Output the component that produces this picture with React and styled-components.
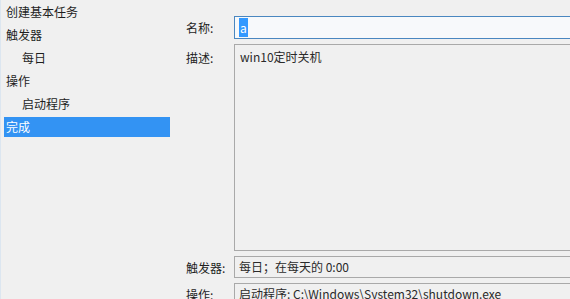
import React from 'react';
import styled, { createGlobalStyle } from 'styled-components';

const GlobalStyle = createGlobalStyle`
    html, body {
        margin: 0;
        padding: 0;
        background: #f0f0f0;
        overflow: hidden;
    }
    body {
        font-family: "Noto Sans CJK SC", "Liberation Sans", sans-serif;
        font-size: 12px;
        color: #1e1e1e;
    }
`

const Window = styled.div`
    display: flex;
    width: 570px;
    height: 299px;
    overflow: hidden;
    border-left: 1px solid #dce6f0;
    box-sizing: border-box;
`

const Sidebar = styled.div`
    width: 166px;
    flex-shrink: 0;
    padding-left: 3px;
    display: flex;
    flex-direction: column;
`

const NavItem = styled.div`
    height: ${p => p.selected ? '20px' : '23px'};
    margin-top: ${p => p.selected ? '2px' : '0'};
    line-height: ${p => p.selected ? '20px' : '23px'};
    padding-left: ${p => p.indent ? '18px' : '2px'};
    background: ${p => p.selected ? '#3393f3' : 'transparent'};
    color: ${p => p.selected ? '#ffffff' : '#1e1e1e'};
    white-space: nowrap;
`

const Main = styled.div`
    flex: 1;
    padding: 16px 0 0 16px;
    display: flex;
    flex-direction: column;
    gap: 5px;
`

const Row = styled.div`
    display: flex;
    align-items: ${p => p.top ? 'flex-start' : 'center'};
`

const Label = styled.div`
    width: 48px;
    flex-shrink: 0;
    padding-top: ${p => p.top ? '5px' : '0'};
    white-space: nowrap;
`

const Field = styled.div`
    width: 345px;
    flex-shrink: 0;
    box-sizing: border-box;
    height: ${p => p.h}px;
    border: 1px solid ${p => p.focused ? '#4a87c0' : '#a9a9a9'};
    background: ${p => p.focused ? '#f7f9fb' : '#f0f0f0'};
    padding: ${p => p.multi ? '4px 5px' : '0 4px'};
    line-height: ${p => p.multi ? '16px' : `${p.h - 2}px`};
    white-space: nowrap;
    color: #2a2a2a;
`

const Selected = styled.span`
    background: #3399ff;
    color: #fff;
    padding: 1px 1px;
`

export default function App() {
    return (
        <>
            <GlobalStyle />
            <Window>
                <Sidebar>
                    <NavItem>创建基本任务</NavItem>
                    <NavItem>触发器</NavItem>
                    <NavItem indent>每日</NavItem>
                    <NavItem>操作</NavItem>
                    <NavItem indent>启动程序</NavItem>
                    <NavItem selected>完成</NavItem>
                </Sidebar>
                <Main>
                    <Row>
                        <Label>名称:</Label>
                        <Field h={23} focused><Selected>a</Selected></Field>
                    </Row>
                    <Row top>
                        <Label top>描述:</Label>
                        <Field h={207} multi>win10定时关机</Field>
                    </Row>
                    <Row>
                        <Label>触发器:</Label>
                        <Field h={22}>每日；在每天的 0:00</Field>
                    </Row>
                    <Row>
                        <Label>操作:</Label>
                        <Field h={22}>启动程序: C:\Windows\System32\shutdown.exe</Field>
                    </Row>
                </Main>
            </Window>
        </>
    );
}
